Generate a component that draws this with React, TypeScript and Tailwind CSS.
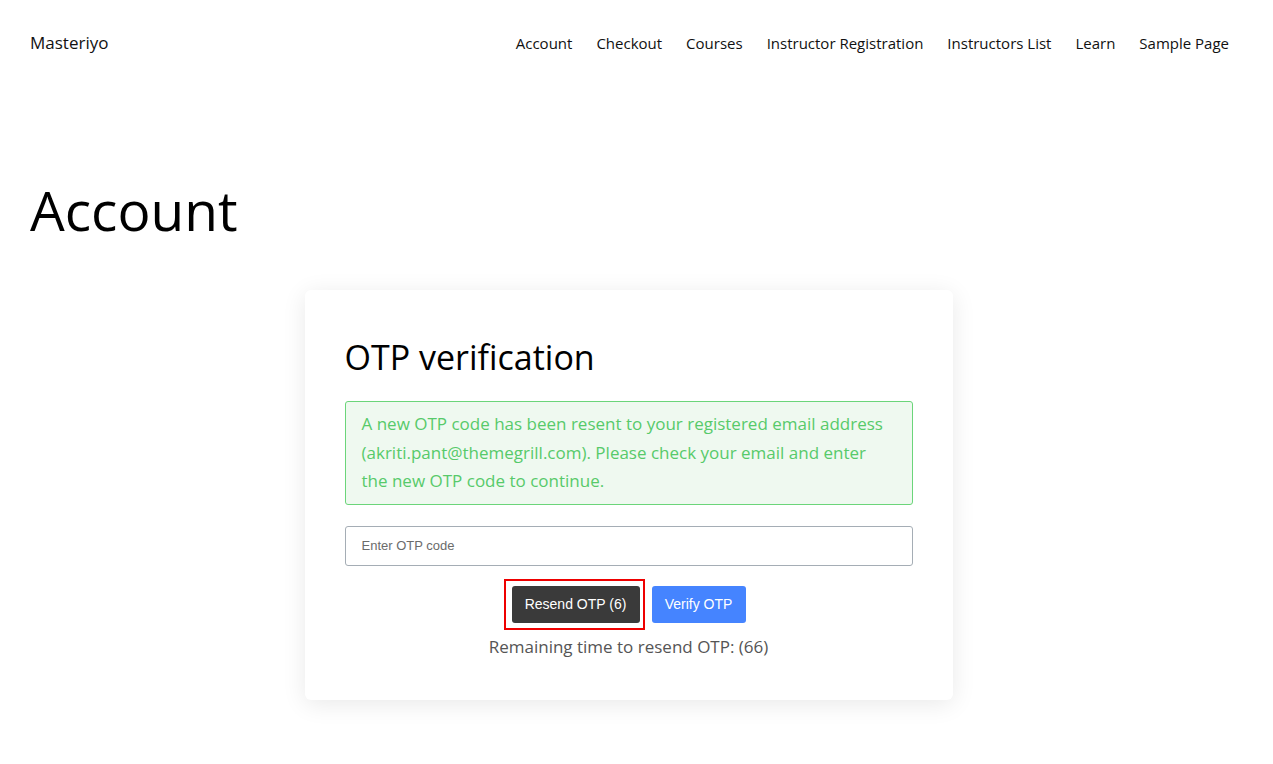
import React from "react";

const navLinks = [
  "Account",
  "Checkout",
  "Courses",
  "Instructor Registration",
  "Instructors List",
  "Learn",
  "Sample Page",
];

const App: React.FC = (): JSX.Element => {
  return (
    <div className="min-h-[764px] bg-white text-black font-['Open_Sans',sans-serif]">
      <header className="flex items-center justify-between h-[86px] pl-[30px] pr-[44px]">
        <a className="text-[17px] text-[#111]">Masteriyo</a>
        <nav className="flex gap-[24px] text-[15px] text-[#111]">
          {navLinks.map((link) => (
            <a key={link}>{link}</a>
          ))}
        </nav>
      </header>

      <main className="pl-[30px] pr-[46px]">
        <h1 className="mt-[92px] text-[55px] leading-[64px] font-normal">Account</h1>

        <div className="mx-auto mt-[48px] w-[648px] rounded-[6px] bg-white px-[40px] pt-[45px] pb-[41px] shadow-[0_4px_24px_rgba(0,0,0,0.09)]">
          <h2 className="text-[34px] leading-[44px] text-black">OTP verification</h2>

          <div className="mt-[22px] rounded-[3px] border border-[#6bd57a] bg-[#eff9f0] px-[16px] py-[8px] text-[17px] leading-[28.5px] text-[#57ca6a]">
            A new OTP code has been resent to your registered email address
            (akriti.pant@themegrill.com). Please check your email and enter the
            new OTP code to continue.
          </div>

          <input
            type="text"
            placeholder="Enter OTP code"
            className="mt-[21px] block h-[40px] w-full rounded-[3px] border border-[#a5adb5] px-[16px] font-['Liberation_Sans',Arial,sans-serif] text-[13px] placeholder:text-[#6b6b6b] focus:outline-none"
          />

          <div className="mt-[20px] flex justify-center gap-[12px]">
            <div className="relative">
              <button className="h-[37px] w-[128px] rounded-[3px] bg-[#3a3a3a] font-['Liberation_Sans',Arial,sans-serif] text-[14px] text-white">
                Resend OTP (6)
              </button>
              <span className="pointer-events-none absolute -left-[8px] -right-[5px] -top-[7px] -bottom-[7px] border-2 border-[#ee0000]" />
            </div>
            <button className="h-[37px] w-[94px] rounded-[3px] bg-[#4584ff] font-['Liberation_Sans',Arial,sans-serif] text-[14px] text-white">
              Verify OTP
            </button>
          </div>

          <p className="mt-[12px] text-center text-[17px] leading-[24px] text-[#555]">
            Remaining time to resend OTP: (66)
          </p>
        </div>
      </main>
    </div>
  );
};

export default App;
